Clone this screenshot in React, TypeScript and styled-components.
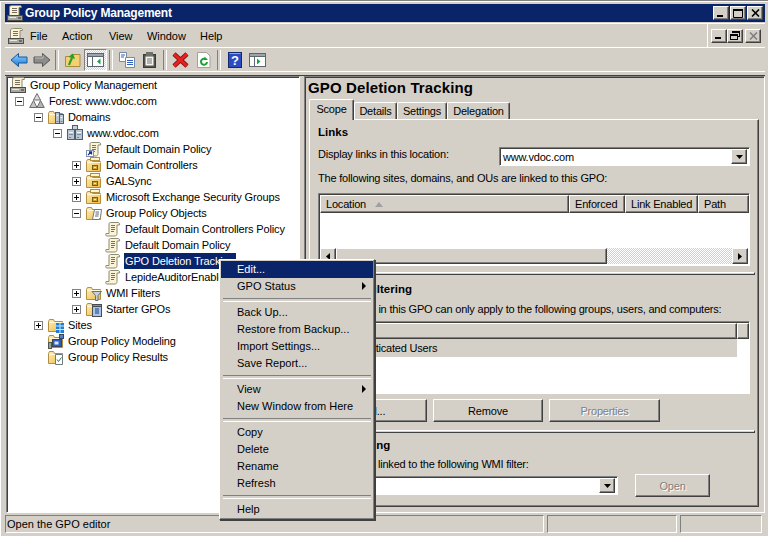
import React, { FC, ReactNode } from "react";
import styled, { createGlobalStyle, css } from "styled-components";

const face = "#d4d0c8";
const navy = "#0a246a";

const raised = css`
  border: 1px solid;
  border-color: #fff #404040 #404040 #fff;
  box-shadow: inset -1px -1px 0 #808080;
  background: ${face};
`;

const sunken = css`
  border: 1px solid;
  border-color: #808080 #fff #fff #808080;
  box-shadow: inset 1px 1px 0 #404040;
`;

const GlobalStyle = createGlobalStyle`
  html, body {
    margin: 0;
    padding: 0;
    background: ${face};
  }
  body {
    font-family: "Liberation Sans", Arial, sans-serif;
    font-size: 11px;
    color: #000;
  }
  * {
    box-sizing: border-box;
  }
`;

const Page = styled.div`
  position: relative;
  width: 768px;
  height: 536px;
  overflow: hidden;
  padding: 4px 3px 3px 5px;
  display: flex;
  flex-direction: column;
  box-shadow: inset 0 1px 0 #808080, inset 0 2px 0 #fff, inset 1px 0 0 #fff;
`;

const TitleBar = styled.div`
  height: 18px;
  background: ${navy};
  color: #fff;
  font-weight: bold;
  font-size: 12px;
  letter-spacing: -0.2px;
  display: flex;
  align-items: center;
  padding: 0 2px 0 2px;
  gap: 2px;
  flex: none;
`;

const TitleText = styled.span`
  flex: 1;
`;

const CaptionGroup = styled.div`
  display: flex;
  gap: 1px;
`;

const CaptionBtn = styled.div<{ $disabled?: boolean; $gapLeft?: number }>`
  ${raised};
  width: 16px;
  height: 14px;
  display: flex;
  align-items: center;
  justify-content: center;
  color: ${(p) => (p.$disabled ? "#808080" : "#000")};
  margin-left: ${(p) => p.$gapLeft ?? 0}px;
`;

const MenuBar = styled.div`
  margin-top: 1px;
  height: 25px;
  flex: none;
  display: flex;
  align-items: center;
  border-top: 1px solid #fff;
  border-bottom: 1px solid #fff;
  padding-left: 3px;
`;

const MenuLabel = styled.span<{ $w: number; $first?: boolean }>`
  width: ${(p) => p.$w}px;
  font-size: 11px;
  letter-spacing: -0.05px;
  margin-left: ${(p) => (p.$first ? 3 : 0)}px;
`;

const MdiButtons = styled.div`
  margin-left: auto;
  align-self: stretch;
  border-left: 1px solid #fff;
  padding: 0 4px 0 3px;
  display: flex;
  align-items: center;
`;

const Toolbar = styled.div`
  height: 24px;
  flex: none;
  display: flex;
  align-items: center;
  padding-left: 2px;
  border-bottom: 1px solid #fff;
`;

const ToolBtn = styled.div<{ $on?: boolean }>`
  width: 23px;
  height: 22px;
  display: flex;
  align-items: center;
  justify-content: center;
  ${(p) =>
    p.$on &&
    css`
      border: 1px solid;
      border-color: #808080 #fff #fff #808080;
      background: repeating-conic-gradient(#fff 0 25%, ${face} 0 50%) 0 0 / 2px 2px;
    `}
`;

const ToolSep = styled.div`
  width: 8px;
  height: 20px;
  display: flex;
  justify-content: center;
  &::after {
    content: "";
    width: 2px;
    border-left: 1px solid #808080;
    border-right: 1px solid #fff;
  }
`;

const Main = styled.div`
  flex: 1;
  min-height: 0;
  display: flex;
  gap: 4px;
  margin-top: 3px;
  border-top: 1px solid #404040;
`;

const TreePane = styled.div`
  ${sunken};
  width: 294px;
  margin-left: 1px;
  background: #fff;
  flex: none;
  overflow: hidden;
`;

const Row = styled.div<{ $level: number }>`
  height: 16px;
  display: flex;
  align-items: center;
  white-space: nowrap;
  letter-spacing: -0.14px;
  padding-left: ${(p) => (p.$level === 0 ? 3 : 3 + 19 * (p.$level - 1))}px;
`;

const ExpanderSlot = styled.span`
  width: 19px;
  flex: none;
  display: flex;
  justify-content: center;
`;

const Expander = styled.span<{ $open?: boolean }>`
  position: relative;
  width: 9px;
  height: 9px;
  border: 1px solid #808080;
  background: #fff;
  &::before {
    content: "";
    position: absolute;
    left: 1px;
    top: 3px;
    width: 5px;
    height: 1px;
    background: #000;
  }
  &::after {
    content: "";
    display: ${(p) => (p.$open ? "none" : "block")};
    position: absolute;
    left: 3px;
    top: 1px;
    width: 1px;
    height: 5px;
    background: #000;
  }
`;

const IconSlot = styled.span`
  width: 16px;
  height: 16px;
  flex: none;
  margin-right: 3px;
  display: flex;
`;

const NodeText = styled.span<{ $selected?: boolean }>`
  padding: 0 1px;
  height: 16px;
  line-height: 16px;
  ${(p) =>
    p.$selected &&
    css`
      background: ${navy};
      color: #fff;
    `}
`;

const DetailPane = styled.div`
  ${sunken};
  flex: 1;
  min-width: 0;
  padding: 0 4px 5px 4px;
  display: flex;
  flex-direction: column;
  letter-spacing: -0.2px;
`;

const Heading = styled.div`
  font-weight: bold;
  font-size: 15px;
  height: 23px;
  line-height: 22px;
  margin-left: -1px;
  letter-spacing: 0.12px;
`;

const Tabs = styled.div`
  display: flex;
  align-items: flex-end;
  height: 19px;
  position: relative;
  z-index: 1;
`;

const Tab = styled.div<{ $w: number; $active?: boolean }>`
  width: ${(p) => p.$w}px;
  height: ${(p) => (p.$active ? 21 : 17)}px;
  margin-bottom: ${(p) => (p.$active ? -1 : 0)}px;
  padding-bottom: ${(p) => (p.$active ? 3 : 0)}px;
  border: 1px solid;
  border-color: #fff #404040 transparent #fff;
  border-bottom: none;
  border-radius: 2px 2px 0 0;
  background: ${face};
  display: flex;
  align-items: center;
  justify-content: center;
  box-shadow: inset -1px 0 0 #808080;
`;

const TabPanel = styled.div`
  ${raised};
  flex: 1;
  width: 450px;
  padding: 0 8px;
  display: flex;
  flex-direction: column;
`;

const SectionTitle = styled.div<{ $top: number }>`
  font-weight: bold;
  font-size: 11.5px;
  height: 14px;
  line-height: 14px;
  letter-spacing: 0;
  margin-top: ${(p) => p.$top}px;
`;

const Label = styled.div<{ $top?: number }>`
  height: 14px;
  line-height: 14px;
  white-space: nowrap;
  margin-top: ${(p) => p.$top ?? 0}px;
`;

const LocationLabel = styled(Label)`
  align-self: flex-start;
`;

const ComboRow = styled.div<{ $top: number }>`
  display: flex;
  align-items: center;
  margin-top: ${(p) => p.$top}px;
`;

const Combo = styled.div<{ $w: number; $push?: boolean }>`
  ${sunken};
  width: ${(p) => p.$w}px;
  height: 19px;
  background: #fff;
  display: flex;
  align-items: center;
  padding: 1px 2px 1px 3px;
  margin-left: ${(p) => (p.$push ? "auto" : 0)};
`;

const ComboValue = styled.span`
  flex: 1;
`;

const ComboArrow = styled.div`
  ${raised};
  width: 16px;
  height: 15px;
  display: flex;
  align-items: center;
  justify-content: center;
`;

const ListBox = styled.div<{ $top: number }>`
  ${sunken};
  height: 73px;
  margin-top: ${(p) => p.$top}px;
  background: #fff;
  display: flex;
  flex-direction: column;
  position: relative;
  padding: 1px 0 0 1px;
`;

const HeaderRow = styled.div<{ $h?: number }>`
  display: flex;
  height: ${(p) => p.$h ?? 18}px;
  flex: none;
`;

const HeaderCell = styled.div<{ $w?: number }>`
  ${raised};
  ${(p) =>
    p.$w
      ? css`
          width: ${p.$w}px;
          flex: none;
        `
      : css`
          flex: 1;
        `}
  display: flex;
  align-items: center;
  padding-left: 5px;
  gap: 9px;
  white-space: nowrap;
  overflow: hidden;
`;

const SortMark = styled.span`
  width: 0;
  height: 0;
  border-left: 4px solid transparent;
  border-right: 4px solid transparent;
  border-bottom: 5px solid #a0a0a0;
`;

const ScrollBar = styled.div`
  margin-top: auto;
  height: 16px;
  display: flex;
  flex: none;
  margin-bottom: 1px;
  margin-right: 1px;
`;

const ScrollBtn = styled.div`
  ${raised};
  width: 16px;
  display: flex;
  align-items: center;
  justify-content: center;
  flex: none;
`;

const ScrollThumb = styled.div`
  ${raised};
  width: 271px;
  flex: none;
`;

const ScrollTrack = styled.div`
  flex: 1;
  background: repeating-conic-gradient(#fff 0 25%, ${face} 0 50%) 0 0 / 2px 2px;
`;

const Splitter = styled.div<{ $top: number }>`
  height: 3px;
  margin-top: ${(p) => p.$top}px;
  margin-left: -8px;
  margin-right: -5px;
  flex: none;
  border-top: 1px solid #fff;
  border-bottom: 1px solid #404040;
  border-right: 1px solid #404040;
`;

const SelectedRow = styled.div`
  height: 18px;
  width: 417px;
  background: ${face};
  display: flex;
  align-items: center;
  padding-left: 3px;
  gap: 3px;
  white-space: nowrap;
`;

const ButtonRow = styled.div`
  display: flex;
  gap: 6px;
  margin-top: 5px;
  margin-left: -2px;
`;

const PushButton = styled.div<{ $w: number; $disabled?: boolean; $gapLeft?: number }>`
  ${raised};
  width: ${(p) => p.$w}px;
  height: 23px;
  flex: none;
  display: flex;
  align-items: center;
  justify-content: center;
  margin-left: ${(p) => p.$gapLeft ?? 0}px;
  color: ${(p) => (p.$disabled ? "#808080" : "#000")};
  ${(p) => p.$disabled && "text-shadow: 1px 1px 0 #fff;"}
`;

const StatusBar = styled.div`
  height: 18px;
  flex: none;
  margin-top: 2px;
  margin-right: 3px;
  display: flex;
  gap: 3px;
`;

const StatusCell = styled.div<{ $w?: number }>`
  border: 1px solid;
  border-color: #808080 #fff #fff #808080;
  ${(p) => (p.$w ? `width: ${p.$w}px; flex: none;` : "flex: 1;")}
  display: flex;
  align-items: center;
  padding-left: 1px;
`;

const PopupMenu = styled.div`
  position: absolute;
  left: 219px;
  top: 259px;
  width: 156px;
  height: 261px;
  ${raised};
  padding: 1px;
  box-shadow: inset -1px -1px 0 #808080, 1px 1px 0 #404040;
  z-index: 5;
`;

const MenuItem = styled.div<{ $active?: boolean }>`
  height: 17px;
  display: flex;
  align-items: center;
  padding: 0 7px 1px 16px;
  justify-content: space-between;
  ${(p) =>
    p.$active &&
    css`
      background: ${navy};
      color: #fff;
    `}
`;

const MenuSep = styled.div`
  height: 9px;
  display: flex;
  align-items: center;
  padding: 0 2px;
  &::after {
    content: "";
    flex: 1;
    height: 2px;
    border-top: 1px solid #808080;
    border-bottom: 1px solid #fff;
  }
`;

const SubArrow = styled.span`
  width: 0;
  height: 0;
  border-top: 4px solid transparent;
  border-bottom: 4px solid transparent;
  border-left: 4px solid #000;
`;

/* icons */

const Svg: FC<{ children: ReactNode; w?: number; h?: number }> = ({ children, w = 16, h = 16 }) => (
  <svg width={w} height={h} viewBox={`0 0 ${w} ${h}`}>
    {children}
  </svg>
);

const scrollBody = "M5.500 1.500h7.500c1.200 0 2 1 1.500 2.500h-2.500v8.500c0 1.500-.8 2.500-2 2.500H2c-1.200 0-1.600-1.200-1-2.500h3V3c0-1 .6-1.500 1.500-1.500z";

const ScrollIcon: FC<{ shortcut?: boolean }> = ({ shortcut }) => (
  <Svg>
    <path d={scrollBody} fill="#fbf4d6" stroke="#8c8a70" />
    <path d="M6 4.500h4M6 6.500h4M6 8.500h4M6 10.500h3" stroke="#77705a" />
    {shortcut && (
      <>
        <rect x="0.500" y="9.500" width="7" height="6" fill="#fff" stroke="#8090b0" />
        <path d="M2 14l3-3M3 11h2.500v2.500" stroke="#1c2f90" strokeWidth="1.300" fill="none" />
      </>
    )}
  </Svg>
);

const RootIcon = () => (
  <Svg>
    <path d="M5.500 0.500h7.500c1 0 1.800.8 1.300 2H12v8H2.500V2c0-1 1.500-1.500 3-1.500z" fill="#fbf4d6" stroke="#8c8a70" />
    <path d="M5 3.500h5M5 5.500h5M5 7.500h5" stroke="#77705a" />
    <rect x="0.500" y="10.500" width="15" height="5" fill="#a8a8a0" stroke="#4c4c4c" />
    <path d="M2 12.500h7" stroke="#e8e8e0" />
    <path d="M11 13h3" stroke="#30343c" />
  </Svg>
);

const ForestIcon = () => (
  <Svg>
    <path d="M8 0.500l3.500 6.500h-7z" fill="#dcdcdc" stroke="#6c6c6c" />
    <path d="M4.500 7.500l3.500 7H0.700z" fill="#c4c4c4" stroke="#6c6c6c" />
    <path d="M11.500 7.500l3.800 7H8z" fill="#b4b4b4" stroke="#6c6c6c" />
  </Svg>
);

const FolderBase: FC<{ children?: ReactNode }> = ({ children }) => (
  <Svg>
    <defs>
      <linearGradient id="folderFill" x1="0" y1="0" x2="1" y2="1">
        <stop offset="0" stopColor="#fff0b8" />
        <stop offset="1" stopColor="#eeb948" />
      </linearGradient>
    </defs>
    <path d="M0.500 14.500V4.500l1-2h4l1 2h8v10z" fill="url(#folderFill)" stroke="#b28f3c" />
    <path d="M1.500 5.500h13" stroke="#fff8dc" />
    {children}
  </Svg>
);

const OuIcon = () => (
  <FolderBase>
    <rect x="4.500" y="0.500" width="9" height="3" fill="#fff4cc" stroke="#b28f3c" />
    <rect x="6.500" y="8.500" width="5" height="4" fill="#d4a52c" stroke="#7c5c10" />
    <path d="M8 10.500h2" stroke="#fff0b8" />
  </FolderBase>
);

const DomainsIcon = () => (
  <FolderBase>
    <rect x="7.500" y="3.500" width="4" height="11" fill="#b9c6d2" stroke="#4d5f70" />
    <rect x="11.500" y="5.500" width="4" height="9" fill="#b9c6d2" stroke="#4d5f70" />
    <path d="M8.500 12.500h2M12.500 12.500h2" stroke="#20c040" />
    <path d="M8.500 6.500h2M12.500 8.500h2" stroke="#eef4fa" />
  </FolderBase>
);

const DomainIcon = () => (
  <Svg>
    <rect x="5.500" y="0.500" width="5" height="4" fill="#c8d0d8" stroke="#4d5f70" />
    <rect x="0.500" y="4.500" width="7" height="10" fill="#b9c6d2" stroke="#4d5f70" />
    <rect x="8.500" y="4.500" width="7" height="10" fill="#b9c6d2" stroke="#4d5f70" />
    <path d="M2 12.500h2M10 12.500h2" stroke="#20c040" />
    <path d="M2 7.500h4M10 7.500h4" stroke="#eef4fa" />
    <path d="M2 9.500h4M10 9.500h4" stroke="#7c8c9c" />
  </Svg>
);

const GpoFolderIcon = () => (
  <FolderBase>
    <path d="M8.500 4.500h7l-1 8-1.500 2H6.500z" fill="#fff" stroke="#707880" />
    <path d="M9.500 7h3.500M9.500 9h3.500M9 11h3.500" stroke="#5c6670" />
  </FolderBase>
);

const WmiIcon = () => (
  <FolderBase>
    <path d="M6 6.500h9.500l-3.500 4v5h-2.500v-5z" fill="#c8d0d8" stroke="#687078" />
  </FolderBase>
);

const StarterIcon = () => (
  <FolderBase>
    <rect x="6.500" y="3.500" width="9" height="12" fill="#a8c4e8" stroke="#484c50" />
    <path d="M6.500 3.500h9v2h-9z" fill="#b08868" stroke="#484c50" />
    <path d="M9 8h4M9 10h4M9 12h4" stroke="#1c3a88" />
  </FolderBase>
);

const SitesIcon = () => (
  <FolderBase>
    <rect x="8" y="6" width="8" height="10" fill="#1f7fd4" />
    <path d="M8 9h8M8 12.500h8M12 6v10" stroke="#c8e8ff" />
  </FolderBase>
);

const ModelingIcon = () => (
  <FolderBase>
    <rect x="4.500" y="6.500" width="9" height="7" fill="#2f5cc0" stroke="#3c4454" />
    <rect x="6.500" y="8.500" width="4" height="3" fill="#d8e8ff" />
    <rect x="0.500" y="9.500" width="3" height="6" fill="#98a098" stroke="#50584c" />
    <rect x="11.500" y="1.500" width="4" height="4" fill="#5080d0" stroke="#3c4454" />
  </FolderBase>
);

const ResultsIcon = () => (
  <FolderBase>
    <path d="M7.500 5.500h7v10h-7z" fill="#fff" stroke="#707880" />
    <path d="M9 10.500l1.500 2 3-4" stroke="#208040" fill="none" />
  </FolderBase>
);

const BackIcon = () => (
  <Svg w={18} h={16}>
    <defs>
      <linearGradient id="backFill" x1="0" y1="0" x2="0" y2="1">
        <stop offset="0" stopColor="#8fd4ff" />
        <stop offset="1" stopColor="#1c78d8" />
      </linearGradient>
    </defs>
    <path d="M1 8l7.500-6.500V5H17v6H8.500v3.500z" fill="url(#backFill)" stroke="#14589c" />
  </Svg>
);

const ForwardIcon = () => (
  <Svg w={18} h={16}>
    <path d="M17 8L9.500 1.500V5H1v6h8.500v3.500z" fill="#8c8c8c" stroke="#565656" />
    <path d="M2 6h8V3.500" stroke="#c0c0c0" fill="none" />
  </Svg>
);

const UpFolderIcon = () => (
  <Svg>
    <path d="M0.500 14.500V4.500h5l1-2h8.500v12z" fill="#f6d070" stroke="#a88c3c" />
    <path d="M4 13c1-3 2-5 3-7" stroke="#28a028" strokeWidth="2.200" fill="none" />
    <path d="M3.500 5L8 1.500 10 7z" fill="#28a028" />
  </Svg>
);

const PaneToggleIcon: FC<{ right?: boolean }> = ({ right }) => (
  <Svg w={17} h={16}>
    <rect x="0.500" y="1.500" width="16" height="13" fill="#fff" stroke="#5a6670" />
    <rect x="0.500" y="1.500" width="16" height="3" fill="#9aa4ac" stroke="#5a6670" />
    <path d="M5.500 4.500v10" stroke="#5a6670" />
    <path d={right ? "M8 6.500l3.500 3-3.500 3z" : "M13.500 6.500L10 9.500l3.500 3z"} fill="#20a040" />
  </Svg>
);

const CopyIcon = () => (
  <Svg>
    <path d="M0.500 0.500h7v9h-7z" fill="#fff" stroke="#7a8aa0" />
    <path d="M6.500 5.500h9v10h-9z" fill="#fff" stroke="#7a8aa0" />
    <path d="M2 3h4M2 5h3M8 8.500h6M8 10.500h6M8 12.500h6" stroke="#3060c0" />
  </Svg>
);

const PasteIcon = () => (
  <Svg>
    <rect x="1.500" y="2.500" width="12" height="13" fill="#55554f" stroke="#3a3a36" />
    <rect x="3.500" y="4.500" width="8" height="9" fill="#f4f4f0" />
    <rect x="4" y="0" width="7" height="4" fill="#70706a" />
    <path d="M5 7h5M5 9h5M5 11h5" stroke="#707070" />
  </Svg>
);

const DeleteIcon = () => (
  <Svg w={17} h={16}>
    <path d="M2 2l13 12M15 2L2 14" stroke="#8c1010" strokeWidth="4.500" fill="none" />
    <path d="M2 2l13 12M15 2L2 14" stroke="#e82020" strokeWidth="3" fill="none" />
  </Svg>
);

const RefreshIcon = () => (
  <Svg w={14} h={16}>
    <path d="M0.500 0.500h9l3.500 3.500v11.500h-12.500z" fill="#fff" stroke="#9ca49c" />
    <path d="M10 10a3 3 0 1 1-1-2.500" stroke="#18a030" strokeWidth="2" fill="none" />
    <path d="M7.500 4.500l3.500 3.500H7.500z" fill="#18a030" />
  </Svg>
);

const HelpIcon = () => (
  <Svg w={14} h={16}>
    <rect x="0.500" y="0.500" width="13" height="15" fill="#2a4cc0" stroke="#16286c" />
    <path d="M1.500 1.500h11" stroke="#8ca4f0" />
    <text x="7" y="13" textAnchor="middle" fontSize="13" fontWeight="bold" fill="#fff" fontFamily="Liberation Sans">
      ?
    </text>
  </Svg>
);

const UsersIcon = () => (
  <Svg>
    <circle cx="6" cy="5" r="2.500" fill="#f0c890" stroke="#806040" />
    <path d="M2 13c0-3 2-5 4-5s4 2 4 5z" fill="#4070c0" stroke="#304880" />
    <circle cx="11" cy="6" r="2" fill="#f0c890" stroke="#806040" />
  </Svg>
);

const Glyph = styled.svg`
  display: block;
`;

const MinGlyph = () => (
  <Glyph width="10" height="9">
    <rect x="1" y="6" width="6" height="2" fill="currentColor" />
  </Glyph>
);

const MaxGlyph = () => (
  <Glyph width="10" height="9">
    <path d="M0.500 1.500h9v7h-9z" fill="none" stroke="currentColor" />
    <rect x="0" y="0" width="10" height="2" fill="currentColor" />
  </Glyph>
);

const CloseGlyph = () => (
  <Glyph width="9" height="8">
    <path d="M1 0.500l7 7M8 0.500l-7 7" stroke="currentColor" fill="none" strokeWidth="1.600" />
  </Glyph>
);

const RestoreGlyph = () => (
  <Glyph width="10" height="9" shapeRendering="crispEdges">
    <path d="M2.500 2V0.500h6.500v5H7" fill="none" stroke="currentColor" />
    <path d="M0.500 3.500h6.500v5H0.500z" fill="none" stroke="currentColor" />
    <path d="M2 0h7v1.500H2zM0 3h7v1.500H0z" fill="currentColor" />
  </Glyph>
);

const DownArrow = () => (
  <Glyph width="7" height="4">
    <path d="M0 0h7L3.500 4z" fill="#000" />
  </Glyph>
);

const SideArrow: FC<{ left?: boolean }> = ({ left }) => (
  <Glyph width="4" height="7">
    <path d={left ? "M4 0v7L0 3.500z" : "M0 0v7l4-3.500z"} fill="#000" />
  </Glyph>
);

type TreeNode = {
  level: number;
  label: string;
  icon: ReactNode;
  state?: "open" | "closed";
  selected?: boolean;
};

const treeNodes: TreeNode[] = [
  { level: 0, label: "Group Policy Management", icon: <RootIcon /> },
  { level: 1, label: "Forest: www.vdoc.com", icon: <ForestIcon />, state: "open" },
  { level: 2, label: "Domains", icon: <DomainsIcon />, state: "open" },
  { level: 3, label: "www.vdoc.com", icon: <DomainIcon />, state: "open" },
  { level: 4, label: "Default Domain Policy", icon: <ScrollIcon shortcut /> },
  { level: 4, label: "Domain Controllers", icon: <OuIcon />, state: "closed" },
  { level: 4, label: "GALSync", icon: <OuIcon />, state: "closed" },
  { level: 4, label: "Microsoft Exchange Security Groups", icon: <OuIcon />, state: "closed" },
  { level: 4, label: "Group Policy Objects", icon: <GpoFolderIcon />, state: "open" },
  { level: 5, label: "Default Domain Controllers Policy", icon: <ScrollIcon /> },
  { level: 5, label: "Default Domain Policy", icon: <ScrollIcon /> },
  { level: 5, label: "GPO Deletion Tracking", icon: <ScrollIcon />, selected: true },
  { level: 5, label: "LepideAuditorEnabled", icon: <ScrollIcon /> },
  { level: 4, label: "WMI Filters", icon: <WmiIcon />, state: "closed" },
  { level: 4, label: "Starter GPOs", icon: <StarterIcon />, state: "closed" },
  { level: 2, label: "Sites", icon: <SitesIcon />, state: "closed" },
  { level: 2, label: "Group Policy Modeling", icon: <ModelingIcon /> },
  { level: 2, label: "Group Policy Results", icon: <ResultsIcon /> },
];

type PopupEntry = { label: string; active?: boolean; sub?: boolean } | "sep";

const popupEntries: PopupEntry[] = [
  { label: "Edit...", active: true },
  { label: "GPO Status", sub: true },
  "sep",
  { label: "Back Up..." },
  { label: "Restore from Backup..." },
  { label: "Import Settings..." },
  { label: "Save Report..." },
  "sep",
  { label: "View", sub: true },
  { label: "New Window from Here" },
  "sep",
  { label: "Copy" },
  { label: "Delete" },
  { label: "Rename" },
  { label: "Refresh" },
  "sep",
  { label: "Help" },
];

export default function App() {
  return (
    <Page>
      <GlobalStyle />
      <TitleBar>
        <RootIcon />
        <TitleText>Group Policy Management</TitleText>
        <CaptionGroup>
          <CaptionBtn><MinGlyph /></CaptionBtn>
          <CaptionBtn><MaxGlyph /></CaptionBtn>
          <CaptionBtn><CloseGlyph /></CaptionBtn>
        </CaptionGroup>
      </TitleBar>

      <MenuBar>
        <IconSlot>
          <RootIcon />
        </IconSlot>
        <MenuLabel $w={32} $first>File</MenuLabel>
        <MenuLabel $w={47}>Action</MenuLabel>
        <MenuLabel $w={38}>View</MenuLabel>
        <MenuLabel $w={53}>Window</MenuLabel>
        <MenuLabel $w={40}>Help</MenuLabel>
        <MdiButtons>
          <CaptionBtn><MinGlyph /></CaptionBtn>
          <CaptionBtn><RestoreGlyph /></CaptionBtn>
          <CaptionBtn $disabled $gapLeft={2}><CloseGlyph /></CaptionBtn>
        </MdiButtons>
      </MenuBar>

      <Toolbar>
        <ToolBtn><BackIcon /></ToolBtn>
        <ToolBtn><ForwardIcon /></ToolBtn>
        <ToolSep />
        <ToolBtn><UpFolderIcon /></ToolBtn>
        <ToolBtn $on><PaneToggleIcon /></ToolBtn>
        <ToolSep />
        <ToolBtn><CopyIcon /></ToolBtn>
        <ToolBtn><PasteIcon /></ToolBtn>
        <ToolSep />
        <ToolBtn><DeleteIcon /></ToolBtn>
        <ToolBtn><RefreshIcon /></ToolBtn>
        <ToolSep />
        <ToolBtn><HelpIcon /></ToolBtn>
        <ToolBtn><PaneToggleIcon right /></ToolBtn>
      </Toolbar>

      <Main>
        <TreePane>
          {treeNodes.map((n, i) => (
            <Row key={i} $level={n.level}>
              {n.level > 0 && (
                <ExpanderSlot>{n.state && <Expander $open={n.state === "open"} />}</ExpanderSlot>
              )}
              <IconSlot>{n.icon}</IconSlot>
              <NodeText $selected={n.selected}>{n.label}</NodeText>
            </Row>
          ))}
        </TreePane>

        <DetailPane>
          <Heading>GPO Deletion Tracking</Heading>
          <Tabs>
            <Tab $w={45} $active>Scope</Tab>
            <Tab $w={43}>Details</Tab>
            <Tab $w={50}>Settings</Tab>
            <Tab $w={63}>Delegation</Tab>
          </Tabs>
          <TabPanel>
            <SectionTitle $top={5}>Links</SectionTitle>
            <ComboRow $top={8}>
              <LocationLabel>Display links in this location:</LocationLabel>
              <Combo $w={251} $push>
                <ComboValue>www.vdoc.com</ComboValue>
                <ComboArrow><DownArrow /></ComboArrow>
              </Combo>
            </ComboRow>
            <Label $top={5}>The following sites, domains, and OUs are linked to this GPO:</Label>
            <ListBox $top={8}>
              <HeaderRow>
                <HeaderCell $w={249}>Location <SortMark /></HeaderCell>
                <HeaderCell $w={56}>Enforced</HeaderCell>
                <HeaderCell $w={73}>Link Enabled</HeaderCell>
                <HeaderCell>Path</HeaderCell>
              </HeaderRow>
              <ScrollBar>
                <ScrollBtn><SideArrow left /></ScrollBtn>
                <ScrollThumb />
                <ScrollTrack />
                <ScrollBtn><SideArrow /></ScrollBtn>
              </ScrollBar>
            </ListBox>
            <Splitter $top={6} />

            <SectionTitle $top={7}>Security Filtering</SectionTitle>
            <Label $top={6}>The settings in this GPO can only apply to the following groups, users, and computers:</Label>
            <ListBox $top={5}>
              <HeaderRow $h={16}>
                <HeaderCell $w={417}>Name</HeaderCell>
                <HeaderCell />
              </HeaderRow>
              <SelectedRow><UsersIcon />Authenticated Users</SelectedRow>
            </ListBox>
            <ButtonRow>
              <PushButton $w={111}>Add...</PushButton>
              <PushButton $w={110}>Remove</PushButton>
              <PushButton $w={111} $disabled>Properties</PushButton>
            </ButtonRow>
            <Splitter $top={8} />

            <SectionTitle $top={5}>WMI Filtering</SectionTitle>
            <Label $top={5}>This GPO is linked to the following WMI filter:</Label>
            <ComboRow $top={3}>
              <Combo $w={300}>
                <ComboValue />
                <ComboArrow><DownArrow /></ComboArrow>
              </Combo>
              <PushButton $w={75} $disabled $gapLeft={17}>Open</PushButton>
            </ComboRow>
          </TabPanel>
        </DetailPane>
      </Main>

      <StatusBar>
        <StatusCell>Open the GPO editor</StatusCell>
        <StatusCell $w={130} />
        <StatusCell $w={82} />
      </StatusBar>

      <PopupMenu>
        {popupEntries.map((e, i) =>
          e === "sep" ? (
            <MenuSep key={i} />
          ) : (
            <MenuItem key={i} $active={e.active}>
              {e.label}
              {e.sub && <SubArrow />}
            </MenuItem>
          )
        )}
      </PopupMenu>
    </Page>
  );
}
